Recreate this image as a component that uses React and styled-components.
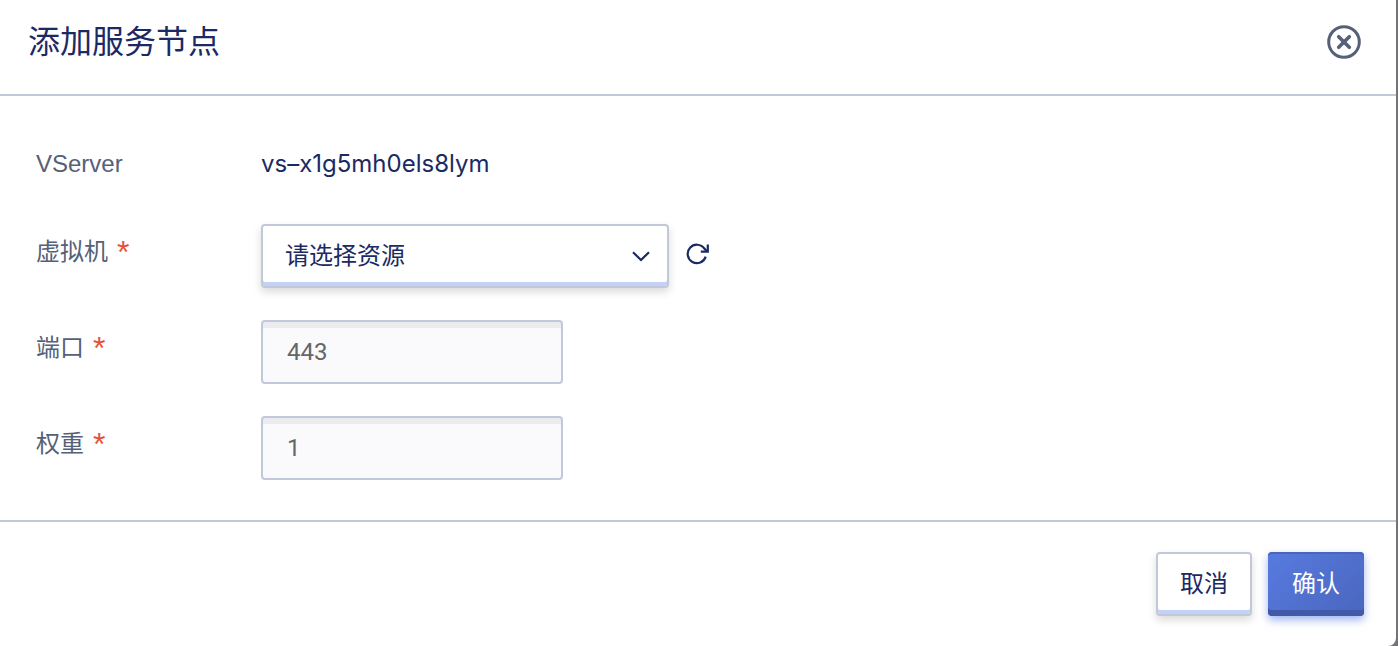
import React from "react";
import styled, { createGlobalStyle, css } from "styled-components";

const GlobalStyle = createGlobalStyle`
  *, *::before, *::after { box-sizing: border-box; }
  html, body, #root { height: 100%; }
  body {
    margin: 0;
    background: #747477;
    font-family: Inter, "Noto Sans CJK SC", sans-serif;
    font-size: 24px;
    line-height: 32px;
    color: #1b2a63;
  }
`;

const Dialog = styled.form`
  display: flex;
  flex-direction: column;
  min-height: 100%;
  margin-right: 2px;
  background: #fff;
  border-bottom-right-radius: 8px;
`;

const Header = styled.header`
  display: flex;
  align-items: center;
  justify-content: space-between;
  padding: 18px 34px 28px 28px;
  border-bottom: 2px solid #c1c8da;
`;

const Title = styled.h2`
  margin: 0;
  font-size: 32px;
  font-weight: 400;
  line-height: 48px;
`;

const IconButton = styled.button`
  display: flex;
  padding: 0;
  border: 0;
  background: none;
  color: ${(p) => p.$color};
  cursor: pointer;
`;

const Body = styled.div`
  flex: 1;
  display: flex;
  flex-direction: column;
  gap: 32px;
  padding: 32px 36px 40px;
`;

const Row = styled.div`
  display: grid;
  grid-template-columns: 225px 1fr;
  align-items: start;
  min-height: 64px;
`;

const labelText = css`
  padding: 12px 0;
  color: #566078;
`;

const Label = styled.label`
  ${labelText}
`;

const StaticLabel = styled.span`
  ${labelText}
  padding: 20px 0 12px;
  font-family: "Liberation Sans", Arial, sans-serif;
`;

const Required = styled.span`
  margin-left: 9px;
  color: #e8503a;
  font-family: "Liberation Sans", Arial, sans-serif;
  font-size: 32px;
  line-height: 24px;
  vertical-align: -3px;
`;

const StaticValue = styled.span`
  padding: 20px 0 12px;
`;

const Controls = styled.div`
  display: flex;
  align-items: center;
  gap: 16px;
  > button { padding-bottom: 5px; }
`;

const SelectBox = styled.div`
  display: grid;
  align-items: center;
  width: 408px;
  > * { grid-area: 1 / 1; }
  > svg {
    justify-self: end;
    margin-right: 18px;
    pointer-events: none;
  }
`;

const Select = styled.select`
  appearance: none;
  width: 100%;
  height: 64px;
  padding: 0 48px 0 22px;
  border: 2px solid #c1c8da;
  border-radius: 4px;
  background: #fff;
  box-shadow: inset 0 -4px 0 #c4d1f7, 0 4px 8px rgba(0, 0, 0, 0.15);
  color: inherit;
  font: inherit;
`;

const Input = styled.input`
  width: 302px;
  height: 64px;
  padding: 0 24px;
  border: 2px solid #c1c8da;
  border-radius: 4px;
  background: #fafafd;
  box-shadow: inset 0 6px 0 #ececee;
  color: #666;
  font-family: Roboto, Arial, sans-serif;
  font-size: 24px;
`;

const Footer = styled.footer`
  display: flex;
  justify-content: flex-end;
  gap: 16px;
  padding: 30px 32px;
  border-top: 2px solid #c1c8da;
`;

const Button = styled.button`
  height: 64px;
  min-width: 96px;
  padding: 0 22px;
  border: 2px solid #c1c8da;
  border-radius: 4px;
  background: #fff;
  box-shadow: inset 0 -4px 0 #c4d1f7, 0 4px 8px rgba(0, 0, 0, 0.15);
  color: inherit;
  font: inherit;
  cursor: pointer;
  ${(p) =>
    p.$primary &&
    css`
      padding: 0 24px;
      border: 0;
      background: linear-gradient(135deg, #587be0, #4a66bd);
      box-shadow: inset 0 2px 0 #4a66bb, inset 0 -6px 0 #4059a8, 0 4px 8px rgba(84, 120, 226, 0.55);
      color: #fff;
    `}
`;

const CloseIcon = () => (
  <svg width="36" height="36" viewBox="0 0 36 36" fill="none" stroke="currentColor" aria-hidden="true">
    <circle cx="18" cy="18" r="15.3" strokeWidth="3" />
    <path d="M12.7 12.7 23.3 23.3M23.3 12.7 12.7 23.3" strokeWidth="3.6" strokeLinecap="round" />
  </svg>
);

const ChevronIcon = () => (
  <svg width="20" height="12" viewBox="0 0 20 12" fill="none" stroke="currentColor" strokeWidth="2.2" aria-hidden="true">
    <path d="M2 2.2 10 10 18 2.2" />
  </svg>
);

const RefreshIcon = () => (
  <svg width="24" height="24" viewBox="0 0 24 24" fill="none" stroke="currentColor" strokeWidth="2.2" aria-hidden="true">
    <path d="M20.7 14.6A9.2 9.2 0 1 1 19.4 6.6L21.8 9.2" />
    <path d="M22.8 2.6V9.6H15.8" />
  </svg>
);

const Field = ({ id, label, children }) => (
  <Row>
    <Label htmlFor={id}>
      {label}
      <Required>*</Required>
    </Label>
    <Controls>{children}</Controls>
  </Row>
);

export default function App() {
  return (
    <>
      <GlobalStyle />
      <Dialog role="dialog" aria-labelledby="dialog-title" onSubmit={(e) => e.preventDefault()}>
        <Header>
          <Title id="dialog-title">添加服务节点</Title>
          <IconButton type="button" $color="#566078" aria-label="关闭">
            <CloseIcon />
          </IconButton>
        </Header>
        <Body>
          <Row>
            <StaticLabel>VServer</StaticLabel>
            <StaticValue>vs–x1g5mh0els8lym</StaticValue>
          </Row>
          <Field id="vm" label="虚拟机">
            <SelectBox>
              <Select id="vm">
                <option>请选择资源</option>
              </Select>
              <ChevronIcon />
            </SelectBox>
            <IconButton type="button" $color="#1b2a63" aria-label="刷新">
              <RefreshIcon />
            </IconButton>
          </Field>
          <Field id="port" label="端口">
            <Input id="port" type="text" defaultValue="443" />
          </Field>
          <Field id="weight" label="权重">
            <Input id="weight" type="text" defaultValue="1" />
          </Field>
        </Body>
        <Footer>
          <Button type="button">取消</Button>
          <Button type="submit" $primary>确认</Button>
        </Footer>
      </Dialog>
    </>
  );
}
